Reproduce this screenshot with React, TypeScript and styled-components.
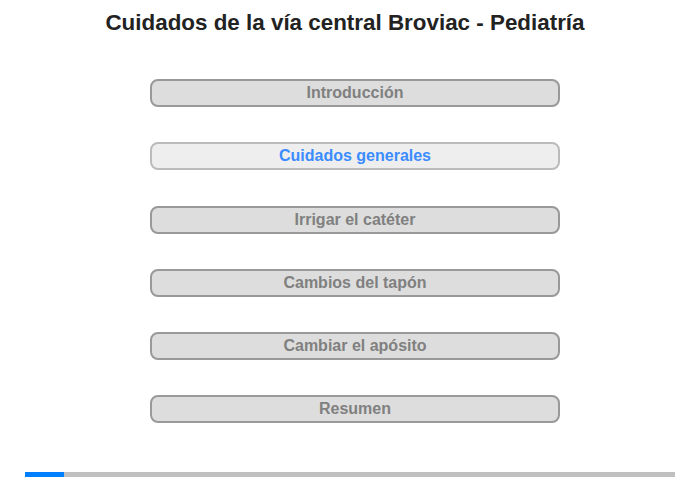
import React from "react";
import styled, { createGlobalStyle } from "styled-components";

const Global = createGlobalStyle`
  html, body { margin: 0; padding: 0; background: #fff; }
  body { font-family: "Liberation Sans", Arial, sans-serif; }
`;

const Page = styled.div`
  width: 700px;
  height: 480px;
  display: flex;
  flex-direction: column;
  align-items: center;
  box-sizing: border-box;
`;

const Title = styled.h1`
  margin: 10px 10px 0 0;
  font-size: 22.4px;
  line-height: 26px;
  font-weight: bold;
  color: #222;
  text-align: center;
`;

const Menu = styled.nav`
  margin: 43px 0 0 10px;
  display: flex;
  flex-direction: column;
  gap: 35.3px;
`;

const Item = styled.div<{ $active?: boolean }>`
  width: 410px;
  height: 28px;
  box-sizing: border-box;
  border: 2px solid ${(p) => (p.$active ? "#bbbbbb" : "#999999")};
  border-radius: 8px;
  background: ${(p) => (p.$active ? "#eeeeee" : "#dddddd")};
  color: ${(p) => (p.$active ? "#3b8cff" : "#808080")};
  font-size: 16px;
  font-weight: bold;
  display: flex;
  align-items: center;
  justify-content: center;
  cursor: pointer;
`;

const Progress = styled.div`
  margin-top: 49px;
  width: 650px;
  height: 5px;
  background: #c0c0c0;
`;

const Fill = styled.div`
  height: 100%;
  background: #0080ff;
`;

const items = [
  "Introducción",
  "Cuidados generales",
  "Irrigar el catéter",
  "Cambios del tapón",
  "Cambiar el apósito",
  "Resumen",
];

export default function App() {
  return (
    <>
      <Global />
      <Page>
        <Title>Cuidados de la vía central Broviac - Pediatría</Title>
        <Menu>
          {items.map((t, i) => (
            <Item key={t} $active={i === 1}>
              {t}
            </Item>
          ))}
        </Menu>
        <Progress>
          <Fill style={{ width: "6%" }} />
        </Progress>
      </Page>
    </>
  );
}
